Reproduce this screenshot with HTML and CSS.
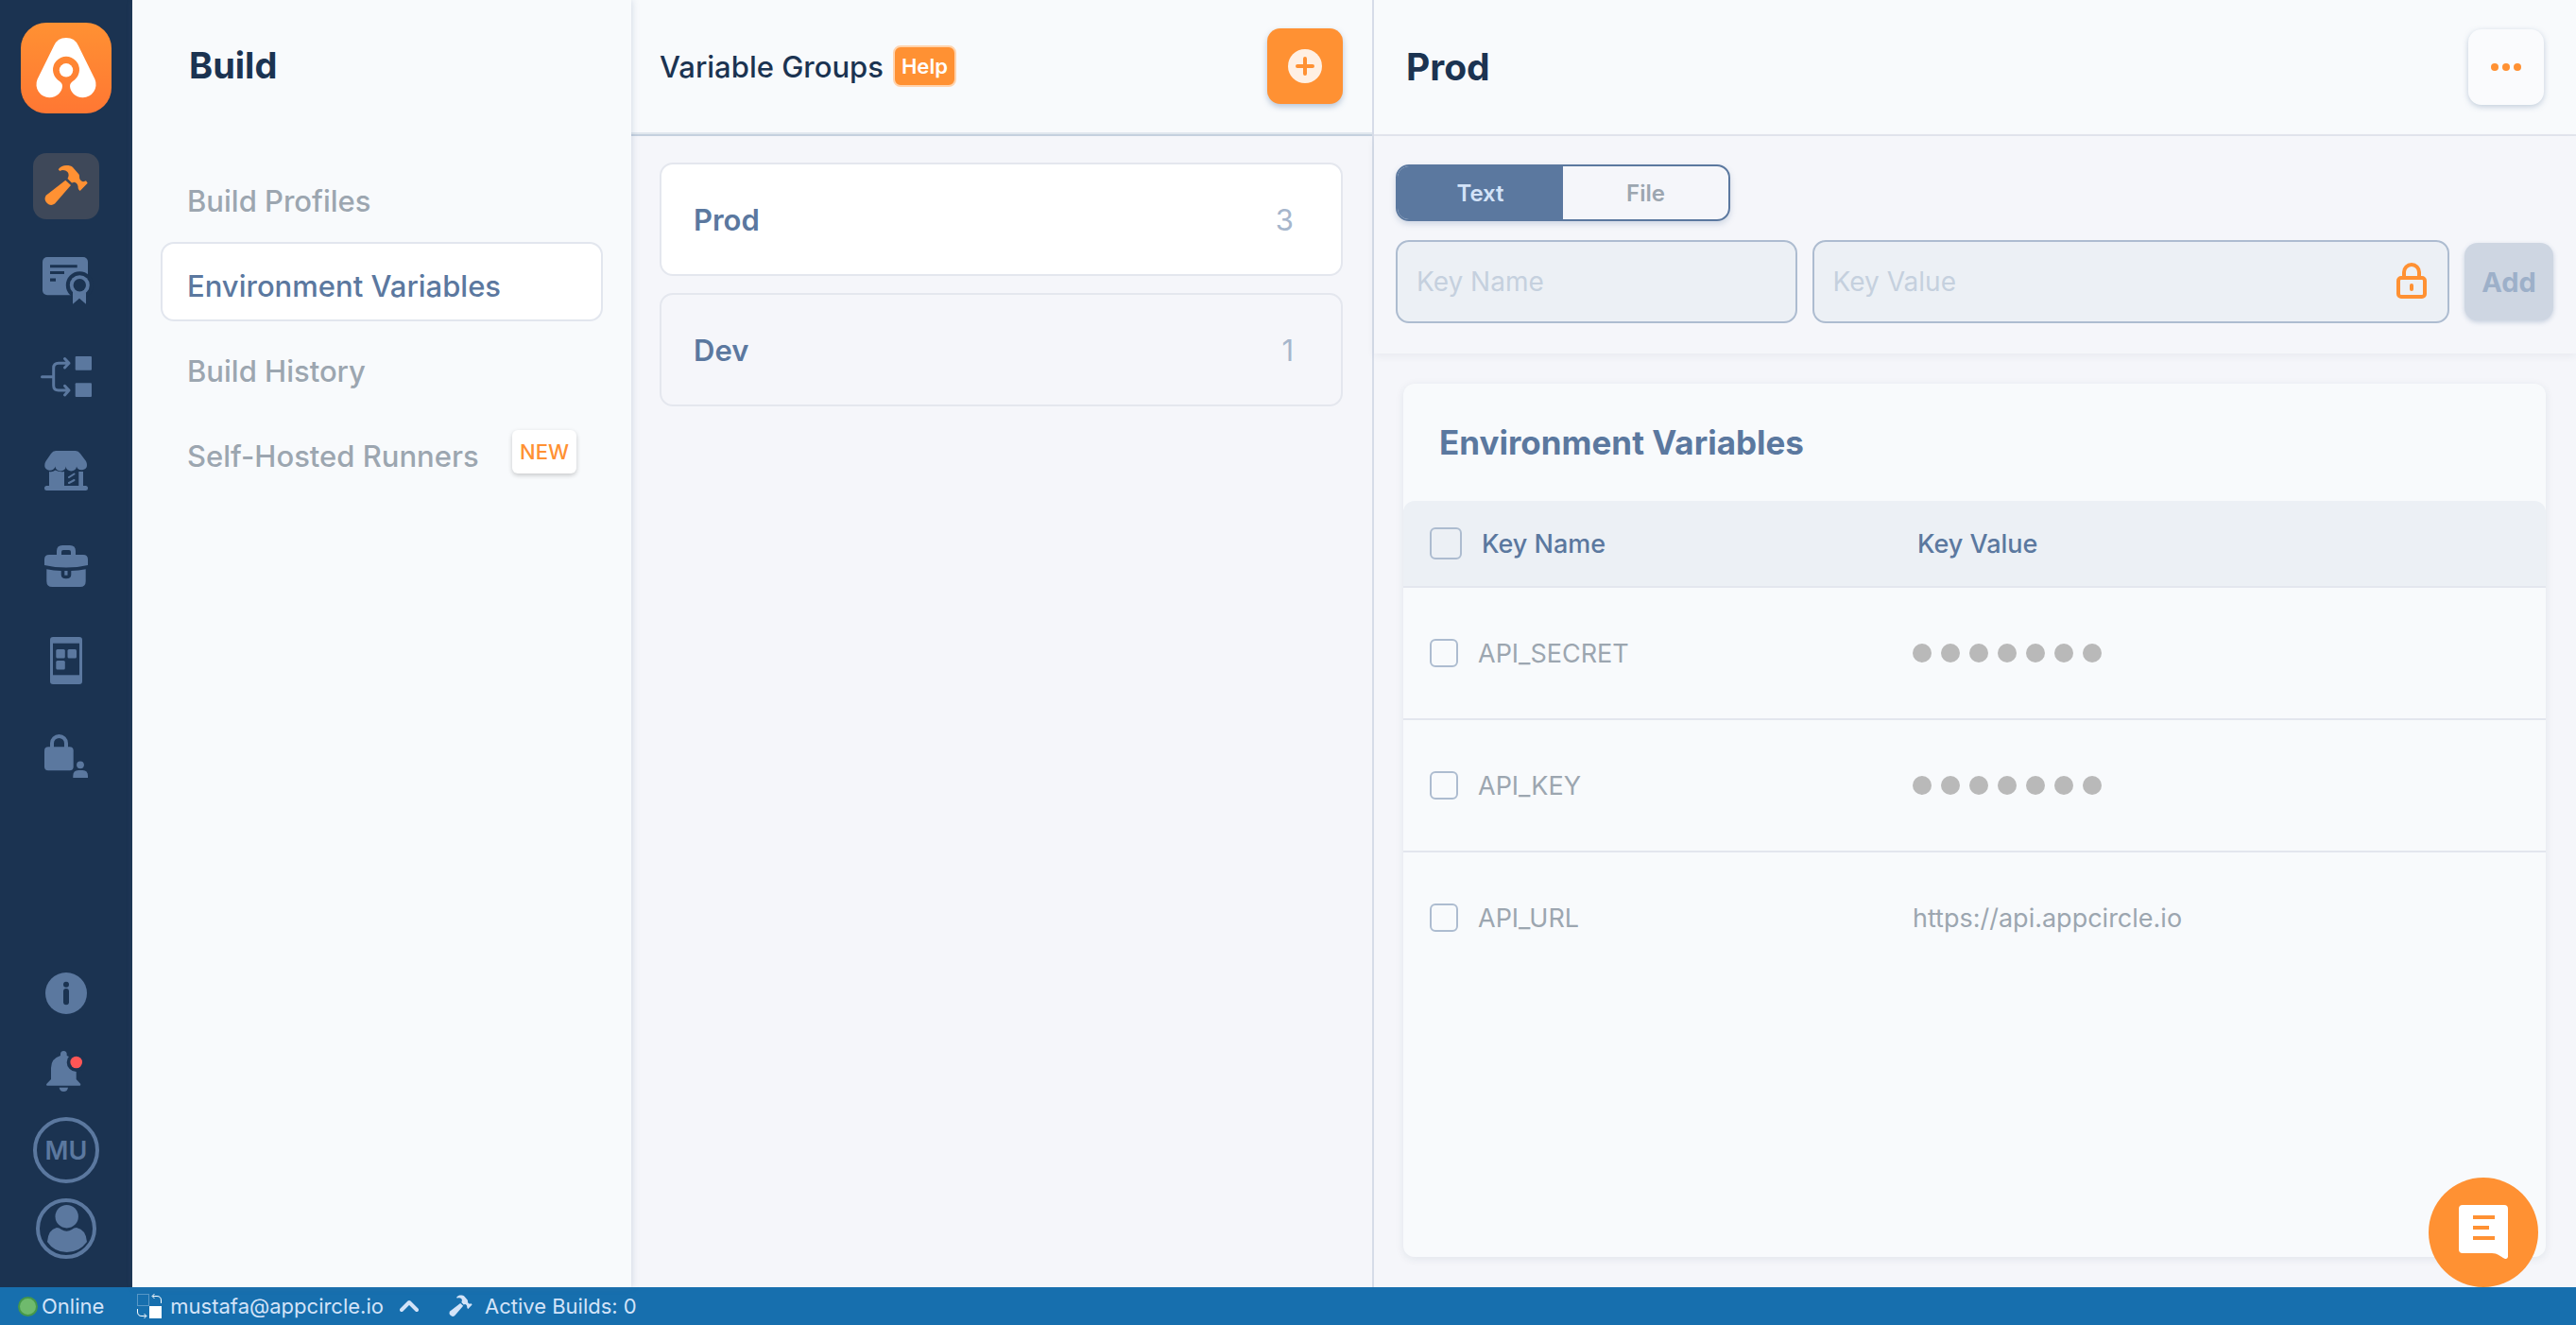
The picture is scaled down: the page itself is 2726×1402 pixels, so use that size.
FILE: index.html
```html
<!DOCTYPE html>
<html lang="en">
<head>
    <meta charset="UTF-8">
    <meta name="viewport" content="width=device-width, initial-scale=1.0">
    <title>Environment Variables</title>
    <link rel="stylesheet" href="styles.css">
</head>
<body>

    <div class="app">

        <!-- Main sidebar -->
        <aside class="sidebar">
            <a class="logo" href="#" aria-label="Home">
                <svg width="96" height="96" viewBox="0 0 96 96">
                    <defs>
                        <linearGradient id="logo-bg" x1="0" y1="0" x2="0" y2="1">
                            <stop offset="0" stop-color="#ff9133"/>
                            <stop offset="1" stop-color="#ff7733"/>
                        </linearGradient>
                    </defs>
                    <rect width="96" height="96" rx="27" fill="url(#logo-bg)"/>
                    <path fill="#fff" d="M30.3 79.3A14 14 0 0 1 17.5 60L35 24.5A14.2 14.2 0 0 1 61 24.5L78.5 60A14 14 0 0 1 65.7 79.3C58 79.3 52 73 52 67C52 64 54 62.5 57 60.5A14 14 0 1 0 39 60.5C42 62.5 44 64 44 67C44 73 38 79.3 30.3 79.3Z"/>
                    <circle cx="48" cy="50.3" r="7.2" fill="#fff"/>
                </svg>
            </a>

            <nav class="sidebar-menu" aria-label="Modules">
                <a class="sidebar-item active" href="#" aria-label="Build">
                    <svg viewBox="0 0 70 70">
                        <path d="M26.7 17.3C29 14 32 13 35 13C38.500 13 40.500 13.500 42 15L48.500 22.500C49.500 24 48.500 26 49.700 28C50.700 29.500 52.500 30.500 54 30L56 29.300L57.700 31.700L49.700 40C48 38.700 47.500 37.500 47.600 35.500C47.400 33 45.500 31 43.500 30.800L41 31.500L36.500 27C38 24.500 38 21.500 36.500 20C34.500 18 31 17.300 28.300 19Z"/>
                        <path d="M34.300 28.700L40 34L23 53.500A6.500 6.500 0 0 1 13.700 44.800Z"/>
                    </svg>
                </a>
                <a class="sidebar-item" href="#" aria-label="Signing identities">
                    <svg viewBox="0 0 70 70">
                        <rect x="10" y="10" width="48" height="40.300" rx="5"/>
                        <path class="cut" d="M18 18.300h28.700v3H18zM18 25h15v3H18zM18 32.500h6v3.300h-6z"/>
                        <circle class="cut" cx="49.300" cy="39.700" r="14.500"/>
                        <path d="M42 46h14v13.700l-7-6-7 6z"/>
                        <circle cx="49.300" cy="39.700" r="10.500"/>
                        <circle class="cut" cx="49.300" cy="39.700" r="6.700"/>
                    </svg>
                </a>
                <a class="sidebar-item" href="#" aria-label="Distribution">
                    <svg viewBox="0 0 70 70">
                        <path class="line" d="M9.500 36.700H21.700M38 22.300H27Q21.700 22.300 21.700 27.500V46Q21.700 51 27 51H38M33.500 17.500L38 22.300L33.500 27M33.500 46.300L38 51L33.500 56"/>
                        <rect x="44.700" y="15" width="17.300" height="14.700" rx="1"/>
                        <rect x="44.700" y="43.300" width="17.300" height="14.700" rx="1"/>
                    </svg>
                </a>
                <a class="sidebar-item" href="#" aria-label="Store submit">
                    <svg viewBox="0 0 70 70">
                        <path d="M24 15H45Q48 15 50 18L56 26Q57 28 57 30A5.600 5 0 0 1 46 31.500A5.600 5 0 0 1 34.700 31.500A5.600 5 0 0 1 23.500 31.500A5.600 5 0 0 1 12.300 30Q12.300 28 13.500 26L19 18Q21 15 24 15Z"/>
                        <path d="M17 37Q20.500 38 23.500 35.500Q28 38 33 37V52H48.300V37H53V52H55.500A2.500 2.500 0 0 1 55.500 57H14.500A2.500 2.500 0 0 1 14.500 52H17Z"/>
                        <path class="line thin" d="M38 43L43.500 39.500M38 49L43.500 46"/>
                    </svg>
                </a>
                <a class="sidebar-item" href="#" aria-label="Enterprise store">
                    <svg viewBox="0 0 70 70">
                        <path d="M25 25V21Q25 15 31 15H39Q45 15 45 21V25H53Q58 25 58 30V36Q47 38.500 35 38.500Q23 38.500 12 36V30Q12 25 17 25ZM30 25H40V22Q40 20 38 20H32Q30 20 30 22Z" fill-rule="evenodd"/>
                        <path d="M14.300 40.300Q22 42 29.700 42V46Q29.700 50.300 35 50.300Q40.300 50.300 40.300 46V42Q48 42 55.700 40.300V53Q55.700 59 49.700 59H20.300Q14.300 59 14.300 53Z"/>
                        <rect x="33.300" y="42" width="3.200" height="4.700"/>
                    </svg>
                </a>
                <a class="sidebar-item" href="#" aria-label="Test devices">
                    <svg viewBox="0 0 70 70">
                        <rect x="18" y="12" width="34" height="50" rx="3"/>
                        <rect class="cut" x="21" y="18.700" width="28" height="33.600"/>
                        <rect x="24.300" y="25" width="9.500" height="9.500" rx="1.500"/>
                        <rect x="36.500" y="25" width="9.500" height="9.500" rx="1.500"/>
                        <rect x="24.300" y="37" width="9.500" height="9.500" rx="1.500"/>
                    </svg>
                </a>
                <a class="sidebar-item" href="#" aria-label="Access management">
                    <svg viewBox="0 0 70 70">
                        <path class="line wide" d="M20 31V24.500A7.500 7.500 0 0 1 35 24.500V31"/>
                        <rect x="12" y="28.300" width="30.700" height="25" rx="4"/>
                        <circle cx="50" cy="47.300" r="3.900"/>
                        <path d="M42.300 61V59Q42.300 53 48 53H52.500Q58 53 58 59V61Z"/>
                    </svg>
                </a>
            </nav>

            <div class="sidebar-footer">
                <button class="sidebar-item" type="button" aria-label="Information">
                    <svg viewBox="0 0 70 70">
                        <circle cx="35" cy="35" r="22"/>
                        <circle class="cut" cx="35" cy="25.700" r="3"/>
                        <rect class="cut" x="32" y="30" width="6" height="17.300" rx="3"/>
                    </svg>
                </button>
                <button class="sidebar-item" type="button" aria-label="Notifications">
                    <svg viewBox="0 0 70 70">
                        <path d="M29 18V16.500A3.300 3.500 0 0 1 35.700 16.500V18Q45.700 21 45.700 31V43L50.300 48Q50.500 49.700 49.500 49.700H15Q13.500 49.700 14.200 48L19 43V31Q19 21 29 18Z"/>
                        <path d="M27.700 51.700H37A4.700 5 0 0 1 27.700 51.700Z"/>
                        <circle class="cut" cx="45.700" cy="25" r="10"/>
                        <circle class="alert" cx="45.700" cy="25" r="6.300"/>
                    </svg>
                </button>
                <button class="sidebar-item initials" type="button">MU</button>
                <button class="sidebar-item" type="button" aria-label="Profile">
                    <svg viewBox="0 0 70 70">
                        <circle class="line wide" cx="35" cy="35" r="30"/>
                        <circle cx="35.700" cy="22.200" r="12.200"/>
                        <path d="M25 34Q28 34 30 36Q35.500 39.500 41 36Q43 34 46 34Q56 36 57 49Q49 60 35.700 60Q22.500 60 15 49Q16 36 25 34Z"/>
                    </svg>
                </button>
            </div>
        </aside>

        <!-- Build menu -->
        <section class="module">
            <h1 class="module-title">Build</h1>
            <nav class="module-menu" aria-label="Build">
                <a class="module-link" href="#"><span>Build Profiles</span></a>
                <a class="module-link selected" href="#"><span>Environment Variables</span></a>
                <a class="module-link" href="#"><span>Build History</span></a>
                <a class="module-link" href="#"><span>Self-Hosted Runners</span><em class="new-badge">NEW</em></a>
            </nav>
        </section>

        <!-- Variable groups -->
        <section class="groups">
            <header class="groups-header">
                <h2 class="groups-title">Variable Groups</h2>
                <a class="help" href="#">Help</a>
                <button class="add-group" type="button" aria-label="Add variable group">
                    <svg width="36" height="36" viewBox="0 0 36 36">
                        <circle cx="18" cy="18" r="18" fill="#fff0e4"/>
                        <path d="M18 10V26M10 18H26" stroke="#ff9133" stroke-width="4" stroke-linecap="round"/>
                    </svg>
                </button>
            </header>
            <div class="group-list">
                <a class="group selected" href="#"><span>Prod</span><span class="count">3</span></a>
                <a class="group" href="#"><span>Dev</span><span class="count">1</span></a>
            </div>
        </section>

        <!-- Selected group -->
        <main class="detail">
            <header class="detail-header">
                <h2 class="detail-title">Prod</h2>
                <button class="more" type="button" aria-label="More actions">
                    <svg width="32" height="8" viewBox="0 0 32 8">
                        <circle cx="4" cy="4" r="4"/>
                        <circle cx="16" cy="4" r="4"/>
                        <circle cx="28" cy="4" r="4"/>
                    </svg>
                </button>
            </header>

            <form class="variable-form">
                <div class="toggle">
                    <button class="toggle-option active" type="button">Text</button>
                    <button class="toggle-option" type="button">File</button>
                </div>
                <div class="fields">
                    <input class="field" type="text" placeholder="Key Name" aria-label="Key Name">
                    <div class="secret-field">
                        <input class="field" type="text" placeholder="Key Value" aria-label="Key Value">
                        <button class="lock" type="button" aria-label="Keep the value secret">
                            <svg width="32" height="38" viewBox="0 0 32 38">
                                <path d="M8 15V10A8 8 0 0 1 24 10V15" />
                                <rect x="2" y="16" width="28" height="20" rx="3"/>
                                <path d="M16 24V28"/>
                            </svg>
                        </button>
                    </div>
                    <button class="add" type="submit" disabled>Add</button>
                </div>
            </form>

            <section class="card">
                <h3 class="card-title">Environment Variables</h3>
                <table class="variables">
                    <thead>
                        <tr>
                            <th class="key"><label class="check"><input type="checkbox">Key Name</label></th>
                            <th>Key Value</th>
                        </tr>
                    </thead>
                    <tbody>
                        <tr>
                            <td class="key"><label class="check"><input type="checkbox">API_SECRET</label></td>
                            <td><div class="dots"><i></i><i></i><i></i><i></i><i></i><i></i><i></i></div></td>
                        </tr>
                        <tr>
                            <td class="key"><label class="check"><input type="checkbox">API_KEY</label></td>
                            <td><div class="dots"><i></i><i></i><i></i><i></i><i></i><i></i><i></i></div></td>
                        </tr>
                        <tr>
                            <td class="key"><label class="check"><input type="checkbox">API_URL</label></td>
                            <td>https://api.appcircle.io</td>
                        </tr>
                    </tbody>
                </table>
            </section>
        </main>
    </div>

    <!-- Status bar -->
    <footer class="status-bar">
        <span class="status online"><i class="online-dot"></i>Online</span>
        <button class="status account" type="button">
            <svg width="26" height="26" viewBox="0 0 26 26">
                <rect x="0.500" y="0.500" width="12" height="12" fill="none" stroke="#9cc3de" stroke-dasharray="1 1"/>
                <rect x="13" y="13" width="13" height="13" fill="#fff"/>
                <path d="M25.500 10V7Q25.500 2.500 21 2.500H16.500M18.500 0L16 2.500L18.500 5M0.500 16V19Q0.500 23.500 5 23.500H9.500M7.500 21L10 23.500L7.500 26" fill="none" stroke="#fff"/>
            </svg>
            mustafa@appcircle.io
            <svg class="chevron" width="20" height="14" viewBox="0 0 20 14">
                <path d="M2 11L10 3L18 11" fill="none" stroke="#d3e3f8" stroke-width="4" stroke-linecap="round" stroke-linejoin="round"/>
            </svg>
        </button>
        <span class="status">
            <svg width="25" height="24" viewBox="12 12 46 45" fill="#d3e3f8">
                <path d="M26.700 17.300C29 14 32 13 35 13C38.500 13 40.500 13.500 42 15L48.500 22.500C49.500 24 48.500 26 49.700 28C50.700 29.500 52.500 30.500 54 30L56 29.300L57.700 31.700L49.700 40C48 38.700 47.500 37.500 47.600 35.500C47.400 33 45.500 31 43.500 30.800L41 31.500L36.500 27C38 24.500 38 21.500 36.500 20C34.500 18 31 17.300 28.300 19Z"/>
                <path d="M34.300 28.700L40 34L23 53.500A6.500 6.500 0 0 1 13.700 44.800Z"/>
            </svg>
            Active Builds: 0
        </span>
    </footer>

    <!-- Chat -->
    <button class="chat" type="button" aria-label="Open chat">
        <svg width="52" height="58" viewBox="0 0 52 58">
            <path fill="#fff" d="M4 0H48Q52 0 52 4V55Q51 58 48 56.500C44 54.500 41 51 35 51H4Q0 51 0 47V4Q0 0 4 0Z"/>
            <path fill="#ff9133" d="M15 11H38V15H15ZM15 22H32V26H15ZM15 33H38V37H15Z"/>
        </svg>
    </button>

</body>
</html>
```

FILE: styles.css
```css
* {
    box-sizing: border-box;
}

body {
    margin: 0;
    height: 100vh;
    display: flex;
    flex-direction: column;
    overflow: hidden;
    background-color: #f5f6fa;
    color: #5b789f;
    font-family: Inter, 'Liberation Sans', sans-serif;
    font-size: 27px;
}

button,
input {
    font-family: inherit;
}

button {
    border: none;
    padding: 0;
    cursor: pointer;
}

a {
    color: inherit;
    text-decoration: none;
}

h1,
h2,
h3 {
    margin: 0;
}

.app {
    flex: 1;
    min-height: 0;
    display: grid;
    grid-template-columns: 140px 528px minmax(0, 8fr) minmax(0, 13fr);
}

/* Main sidebar */
.sidebar {
    display: flex;
    flex-direction: column;
    align-items: center;
    padding: 24px 0 27px;
    background-color: #1b3351;
}

.logo svg {
    display: block;
}

.sidebar-menu {
    display: flex;
    flex-direction: column;
    gap: 30px;
    margin-top: 42px;
}

.sidebar-footer {
    display: flex;
    flex-direction: column;
    gap: 13px;
    margin-top: auto;
}

.sidebar-item {
    display: block;
    width: 70px;
    height: 70px;
    border-radius: 14px;
    background: none;
    color: #5b789f;
}

.sidebar-item.active {
    background-color: #3e4859;
    color: #ff9133;
}

.sidebar-item svg {
    display: block;
    fill: currentColor;
}

.sidebar-item .cut {
    fill: #1b3351;
}

.sidebar-item .alert {
    fill: #ff5656;
}

.sidebar-item .line {
    fill: none;
    stroke: currentColor;
    stroke-width: 3;
    stroke-linecap: round;
    stroke-linejoin: round;
}

.sidebar-item .wide {
    stroke-width: 4;
}

.sidebar-item .thin {
    stroke-width: 2;
}

.initials {
    border: 4px solid #5b789f;
    border-radius: 50%;
    font-size: 27px;
    font-weight: 600;
}

/* Build menu */
.module {
    position: relative;
    z-index: 1;
    padding: 0 30px;
    background-color: #f8fafc;
    box-shadow: 1px 0 7px rgba(91, 120, 159, 0.22);
}

.module-title {
    display: flex;
    align-items: center;
    height: 138px;
    padding-left: 30px;
    color: #1b3351;
    font-size: 38px;
    font-weight: 700;
}

.module-menu {
    display: flex;
    flex-direction: column;
    gap: 6px;
    margin-top: 28px;
}

.module-link {
    display: flex;
    align-items: center;
    justify-content: space-between;
    height: 84px;
    padding: 0 26px;
    border: 2px solid transparent;
    border-radius: 14px;
    color: #9ca6b0;
    font-size: 31px;
    font-weight: 500;
}

.module-link span {
    padding-top: 8px;
}

.module-link.selected {
    border-color: #e2e6ee;
    background-color: #fff;
    color: #5b789f;
}

.new-badge {
    padding: 0 8px;
    border-radius: 6px;
    background-color: #fff;
    box-shadow: 0 2px 5px rgba(0, 0, 0, 0.2);
    color: #ff9133;
    font-size: 22px;
    font-style: normal;
    font-weight: 500;
    line-height: 46px;
}

/* Variable groups */
.groups-header {
    display: flex;
    align-items: center;
    height: 144px;
    padding: 0 31px 2px 30px;
    border-bottom: 2px solid #c5d0de;
    background-color: #f8fafc;
    box-shadow: inset 0 -2px #e0e7ee;
}

.groups-title {
    color: #1b3351;
    font-size: 31px;
    font-weight: 500;
}

.help {
    margin-left: 10px;
    padding: 0 7px;
    border: 2px solid #ffd3ad;
    border-radius: 8px;
    background-color: #ff9133;
    color: #fff;
    font-size: 22px;
    font-weight: 600;
    line-height: 40px;
}

.add-group {
    display: flex;
    align-items: center;
    justify-content: center;
    width: 80px;
    height: 80px;
    margin-left: auto;
    border-radius: 14px;
    background-color: #ff9133;
    box-shadow: 0 3px 6px rgba(91, 120, 159, 0.4);
}

.group-list {
    display: flex;
    flex-direction: column;
    gap: 18px;
    padding: 28px 31px 28px 30px;
}

.group {
    display: flex;
    align-items: center;
    justify-content: space-between;
    height: 120px;
    padding: 0 50px 0 34px;
    border: 2px solid #e4e7ee;
    border-radius: 14px;
    font-size: 31px;
    font-weight: 600;
}

.group.selected {
    background-color: #fff;
}

.count {
    color: #a6b6cc;
    font-size: 31px;
    font-weight: 400;
}

/* Selected group */
.detail {
    display: flex;
    flex-direction: column;
    border-left: 2px solid #d6dce8;
}

.detail-header {
    display: flex;
    align-items: center;
    justify-content: space-between;
    height: 144px;
    padding: 0 34px;
    border-bottom: 2px solid #e3e6ee;
    background-color: #f8fafc;
}

.detail-title {
    padding-bottom: 2px;
    color: #1b3351;
    font-size: 39px;
    font-weight: 700;
}

.more {
    display: flex;
    align-items: center;
    justify-content: center;
    width: 80px;
    height: 80px;
    border-radius: 14px;
    background-color: #fafbfd;
    box-shadow: 0 2px 6px rgba(91, 120, 159, 0.35);
}

.more svg {
    fill: #ff9133;
}

.variable-form {
    padding: 30px 24px 32px 23px;
    box-shadow: 0 3px 8px rgba(27, 51, 81, 0.06);
}

.toggle {
    display: flex;
    width: 354px;
    height: 60px;
    border: 2px solid #5b789f;
    border-radius: 14px;
    box-shadow: 0 3px 6px rgba(91, 120, 159, 0.25);
    overflow: hidden;
}

.toggle-option {
    flex: 1;
    background: none;
    color: #9ca6b0;
    font-size: 24px;
    font-weight: 600;
}

.toggle-option.active {
    background-color: #5b789f;
    color: #d3e3f8;
}

.fields {
    display: grid;
    grid-template-columns: 17fr 27fr 94px;
    align-items: center;
    gap: 16px;
    margin-top: 20px;
}

.field {
    width: 100%;
    height: 88px;
    padding: 0 20px;
    border: 2px solid #adbcd0;
    border-radius: 14px;
    background-color: #ecf0f5;
    color: #5b789f;
    font-size: 28px;
}

.field::placeholder {
    color: #c5d0de;
}

.secret-field {
    position: relative;
}

.lock {
    position: absolute;
    top: 24px;
    right: 24px;
    background: none;
}

.lock svg {
    display: block;
    fill: none;
    stroke: #ff9133;
    stroke-width: 4;
    stroke-linecap: round;
}

.add {
    height: 82px;
    border-radius: 14px;
    background-color: #ced6e2;
    box-shadow: 0 2px 5px rgba(91, 120, 159, 0.3);
    color: #9db0c9;
    font-size: 29px;
    font-weight: 700;
}

.card {
    flex: 1;
    margin: 32px 32px 32px 31px;
    border-radius: 12px;
    background-color: #f8fafc;
    box-shadow: 0 2px 10px rgba(27, 51, 81, 0.09);
}

.card-title {
    display: flex;
    align-items: center;
    height: 124px;
    padding-left: 38px;
    font-size: 35px;
    font-weight: 700;
}

.variables {
    width: 100%;
    border-collapse: separate;
    border-spacing: 0;
    table-layout: fixed;
    text-align: left;
}

.variables th {
    height: 92px;
    padding: 0 12px;
    border-bottom: 2px solid #e3e6ee;
    background-color: #ecf0f5;
    font-weight: 500;
}

.variables th:first-child {
    border-top-left-radius: 12px;
}

.variables th:last-child {
    border-top-right-radius: 12px;
}

.variables td {
    height: 140px;
    padding: 0 7px;
    border-bottom: 2px solid #e3e6ee;
    color: #9ca6b0;
}

.variables tbody tr:last-child td {
    border-bottom-color: transparent;
}

.variables .key {
    width: 44%;
    padding-left: 28px;
}

.check {
    display: flex;
    align-items: center;
    gap: 21px;
}

.check input {
    appearance: none;
    width: 30px;
    height: 30px;
    margin: 0;
    border: 2px solid #adbcd0;
    border-radius: 6px;
}

th .check input {
    width: 34px;
    height: 34px;
}

.dots {
    display: flex;
    gap: 10px;
}

.dots i {
    width: 20px;
    height: 20px;
    border-radius: 50%;
    background-color: #b9b9b9;
}

/* Status bar */
.status-bar {
    display: flex;
    align-items: center;
    gap: 32px;
    height: 40px;
    padding: 0 19px;
    background-color: #176fae;
    color: #d3e3f8;
    font-size: 22px;
}

.status {
    display: flex;
    align-items: center;
    gap: 13px;
    background: none;
    color: inherit;
    font-size: 22px;
}

.status.online {
    gap: 4px;
    margin-right: 3px;
}

.status.account {
    gap: 9px;
}

.chevron {
    margin-left: 8px;
}

.online-dot {
    width: 21px;
    height: 21px;
    border: 2px solid #45974a;
    border-radius: 50%;
    background-color: #6fba6d;
}

/* Chat */
.chat {
    position: fixed;
    right: 40px;
    bottom: 40px;
    display: flex;
    align-items: center;
    justify-content: center;
    width: 116px;
    height: 116px;
    border-radius: 50%;
    background-color: #ff9133;
}
```
